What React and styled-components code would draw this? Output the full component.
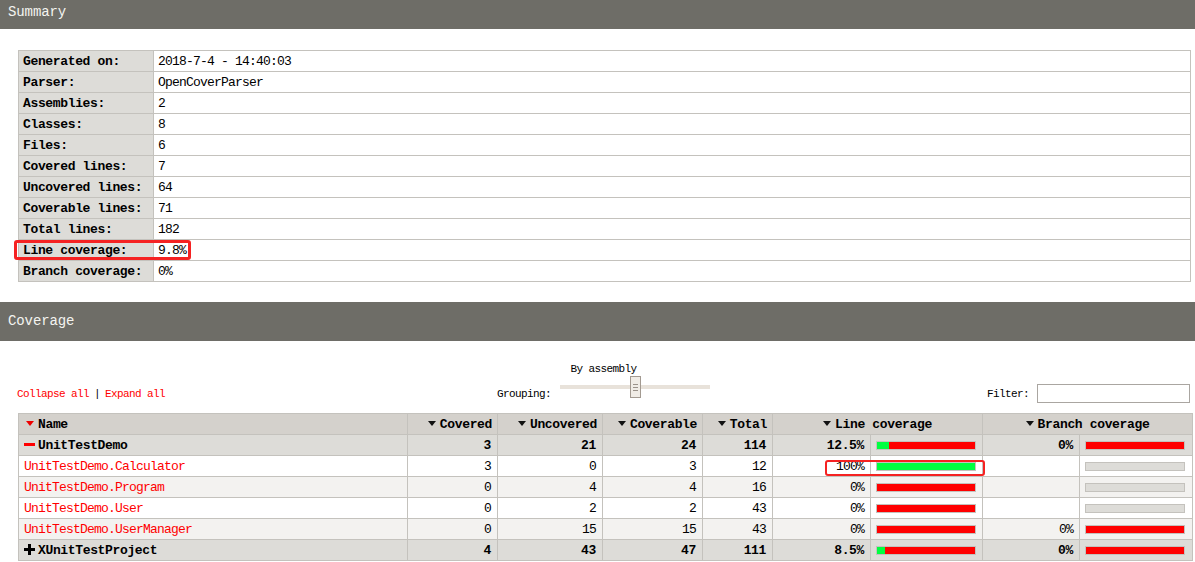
import React from "react";
import styled, { createGlobalStyle } from "styled-components";

const GlobalStyle = createGlobalStyle`
  body {
    margin: 0;
    background: #fff;
    font-family: "Liberation Mono", "DejaVu Sans Mono", monospace;
    color: #000;
  }
`;

const summary = [
  ["Generated on:", "2018-7-4 - 14:40:03"],
  ["Parser:", "OpenCoverParser"],
  ["Assemblies:", "2"],
  ["Classes:", "8"],
  ["Files:", "6"],
  ["Covered lines:", "7"],
  ["Uncovered lines:", "64"],
  ["Coverable lines:", "71"],
  ["Total lines:", "182"],
  ["Line coverage:", "9.8%", true],
  ["Branch coverage:", "0%"],
];

const rows = [
  { name: "UnitTestDemo", group: "open", covered: 3, uncovered: 21, coverable: 24, total: 114, line: 12.5, branch: 0 },
  { name: "UnitTestDemo.Calculator", covered: 3, uncovered: 0, coverable: 3, total: 12, line: 100, branch: null, mark: true },
  { name: "UnitTestDemo.Program", covered: 0, uncovered: 4, coverable: 4, total: 16, line: 0, branch: null },
  { name: "UnitTestDemo.User", covered: 0, uncovered: 2, coverable: 2, total: 43, line: 0, branch: null },
  { name: "UnitTestDemo.UserManager", covered: 0, uncovered: 15, coverable: 15, total: 43, line: 0, branch: 0 },
  { name: "XUnitTestProject", group: "closed", covered: 4, uncovered: 43, coverable: 47, total: 111, line: 8.5, branch: 0 },
];

const App = () => {
  return (
    <Page>
      <GlobalStyle />
      <SectionBar $cut>Summary</SectionBar>
      <Section>
        <SummaryTable>
          <colgroup>
            <col style={{ width: 135 }} />
            <col />
          </colgroup>
          <tbody>
            {summary.map(([label, value, mark]) => (
              <SummaryRow key={label}>
                <LabelCell>
                  {label}
                  {mark && <Highlight $left={-5} $top={0} $width={177} $height={20} $thick={3} />}
                </LabelCell>
                <ValueCell>{value}</ValueCell>
              </SummaryRow>
            ))}
          </tbody>
        </SummaryTable>
      </Section>

      <SectionBar>Coverage</SectionBar>
      <Toolbar>
        <Links>
          <RedLink>Collapse all</RedLink>
          <Divider>|</Divider>
          <RedLink>Expand all</RedLink>
        </Links>
        <Grouping>
          <SmallText>By assembly</SmallText>
          <GroupingRow>
            <SmallText>Grouping:</SmallText>
            <Slider>
              <Track />
              <Thumb>
                <Grip />
                <Grip />
                <Grip />
              </Thumb>
            </Slider>
          </GroupingRow>
        </Grouping>
        <FilterBox>
          <SmallText>Filter:</SmallText>
          <FilterInput type="text" />
        </FilterBox>
      </Toolbar>

      <Section $flush>
        <CoverageTable>
          <colgroup>
            <col style={{ width: 389 }} />
            <col style={{ width: 90 }} />
            <col style={{ width: 105 }} />
            <col style={{ width: 100 }} />
            <col style={{ width: 70 }} />
            <col style={{ width: 98 }} />
            <col style={{ width: 112 }} />
            <col style={{ width: 97 }} />
            <col style={{ width: 113 }} />
          </colgroup>
          <thead>
            <HeadRow>
              <HeadCell $align="left">
                <SortArrow $active />
                Name
              </HeadCell>
              <HeadCell>
                <SortArrow />
                Covered
              </HeadCell>
              <HeadCell>
                <SortArrow />
                Uncovered
              </HeadCell>
              <HeadCell>
                <SortArrow />
                Coverable
              </HeadCell>
              <HeadCell>
                <SortArrow />
                Total
              </HeadCell>
              <HeadCell colSpan={2} $align="center">
                <SortArrow />
                Line coverage
              </HeadCell>
              <HeadCell colSpan={2} $align="center">
                <SortArrow />
                Branch coverage
              </HeadCell>
            </HeadRow>
          </thead>
          <tbody>
            {rows.map((r, i) => (
              <DataRow key={r.name} $group={!!r.group} $alt={i % 2 === 0}>
                <NameCell $group={!!r.group}>
                  {r.group === "open" && <Toggle>
                    <svg width="11" height="11" viewBox="0 0 11 11">
                      <rect x="0" y="4" width="11" height="3" fill="#f00" />
                    </svg>
                  </Toggle>}
                  {r.group === "closed" && <Toggle>
                    <svg width="11" height="11" viewBox="0 0 11 11">
                      <rect x="0" y="4" width="11" height="3" fill="#000" />
                      <rect x="4" y="0" width="3" height="11" fill="#000" />
                    </svg>
                  </Toggle>}
                  {r.name}
                </NameCell>
                <NumCell $bold={!!r.group}>{r.covered}</NumCell>
                <NumCell $bold={!!r.group}>{r.uncovered}</NumCell>
                <NumCell $bold={!!r.group}>{r.coverable}</NumCell>
                <NumCell $bold={!!r.group}>{r.total}</NumCell>
                <NumCell $bold={!!r.group}>
                  {r.line}%
                  {r.mark && <Highlight $left={52} $top={4} $width={160} $height={16} $thick={2} />}
                </NumCell>
                <BarCell>
                  <Bar value={r.line} />
                </BarCell>
                <NumCell $bold={!!r.group}>{r.branch === null ? "" : `${r.branch}%`}</NumCell>
                <BarCell>
                  <Bar value={r.branch} />
                </BarCell>
              </DataRow>
            ))}
          </tbody>
        </CoverageTable>
      </Section>
    </Page>
  );
};

const Bar = ({ value }) => {
  if (value === null) return <BarFrame $empty />;
  return (
    <BarFrame>
      <Green style={{ width: `${value}%` }} />
      <Red />
    </BarFrame>
  );
};

export default App;

const Page = styled.div`
  margin-top: -7px;
  width: 1195px;
  font-size: 13px;
  letter-spacing: -0.8px;
`;

const SectionBar = styled.div`
  height: ${(p) => (p.$cut ? "36px" : "39px")};
  line-height: ${(p) => (p.$cut ? "38px" : "38px")};
  overflow: hidden;
  background-color: #6e6d67;
  color: #f4f4f0;
  font-size: 14px;
  letter-spacing: -0.1px;
  padding-left: 8px;
`;

const Section = styled.div`
  padding: ${(p) => (p.$flush ? "0" : "21px")} 3px 20px 18px;
`;

const SummaryTable = styled.table`
  width: 1173px;
  border-collapse: collapse;
  table-layout: fixed;
`;

const SummaryRow = styled.tr`
  height: 21px;
`;

const LabelCell = styled.td`
  position: relative;
  background-color: #dddcd8;
  border: 1px solid #c4c2bd;
  padding: 0 4px;
  font-weight: bold;
  letter-spacing: -0.35px;
  white-space: nowrap;
`;

const ValueCell = styled.td`
  border: 1px solid #c4c2bd;
  padding: 0 4px;
  white-space: nowrap;
`;

const Highlight = styled.div`
  position: absolute;
  left: ${(p) => p.$left}px;
  top: ${(p) => p.$top}px;
  width: ${(p) => p.$width}px;
  height: ${(p) => p.$height}px;
  border: ${(p) => p.$thick}px solid #f52222;
  border-radius: 3px;
  box-sizing: border-box;
  pointer-events: none;
`;

const Toolbar = styled.div`
  display: grid;
  grid-template-columns: 1fr auto 1fr;
  align-items: end;
  height: 72px;
  box-sizing: border-box;
  padding: 0 5px 10px 17px;
  font-size: 11px;
  letter-spacing: -0.6px;
`;

const Links = styled.div`
  line-height: 14px;
  margin-bottom: 2px;
`;

const RedLink = styled.a`
  color: #f00;
  cursor: pointer;
`;

const Divider = styled.span`
  margin: 0 5px;
`;

const SmallText = styled.span`
  line-height: 14px;
  white-space: nowrap;
`;

const Grouping = styled.div`
  display: flex;
  flex-direction: column;
  align-items: center;
`;

const GroupingRow = styled.div`
  display: flex;
  align-items: flex-end;
  gap: 9px;

  & > ${SmallText} {
    margin-bottom: 2px;
  }
`;

const Slider = styled.div`
  position: relative;
  width: 150px;
  height: 22px;
  margin-bottom: 5px;
`;

const Track = styled.div`
  position: absolute;
  left: 0;
  right: 0;
  top: 9px;
  height: 4px;
  background-color: #e8e2da;
`;

const Thumb = styled.div`
  position: absolute;
  left: 70px;
  top: 0;
  width: 11px;
  height: 22px;
  box-sizing: border-box;
  background-color: #f0ece6;
  border: 1px solid #a39a91;
  display: flex;
  flex-direction: column;
  align-items: center;
  justify-content: center;
  gap: 2px;
`;

const Grip = styled.div`
  width: 5px;
  height: 1px;
  background-color: #9a928a;
`;

const FilterBox = styled.div`
  display: flex;
  justify-content: flex-end;
  align-items: center;
  gap: 8px;
`;

const FilterInput = styled.input`
  width: 153px;
  height: 19px;
  box-sizing: border-box;
  border: 1px solid #aaa6a1;
  padding: 0 3px;
  margin: 0;
  outline: none;
`;

const CoverageTable = styled(SummaryTable)`
  width: 1174px;
`;

const HeadRow = styled.tr`
  height: 21px;
  background-color: #d4d1cc;
`;

const HeadCell = styled.th`
  border: 1px solid #c4c2bd;
  padding: 0 5px;
  text-align: ${(p) => p.$align || "right"};
  font-weight: bold;
  letter-spacing: -0.35px;
  white-space: nowrap;
`;

const SortArrow = styled.span`
  display: inline-block;
  width: 0;
  height: 0;
  border-left: 4px solid transparent;
  border-right: 4px solid transparent;
  border-top: 5px solid ${(p) => (p.$active ? "#e00" : "#111")};
  margin: 0 4px 2px ${(p) => (p.$active ? "2px" : "0")};
  vertical-align: middle;
`;

const DataRow = styled.tr`
  height: 21px;
  background-color: ${(p) => (p.$group ? "#dddcd8" : p.$alt ? "#f3f2f0" : "#fff")};
`;

const NameCell = styled.td`
  border: 1px solid #c4c2bd;
  padding: 0 5px;
  white-space: nowrap;
  color: ${(p) => (p.$group ? "#000" : "#f00")};
  font-weight: ${(p) => (p.$group ? "bold" : "normal")};
  letter-spacing: ${(p) => (p.$group ? "-0.35px" : "-0.8px")};
`;

const Toggle = styled.span`
  display: inline-block;
  width: 11px;
  height: 11px;
  margin-right: 3px;
  vertical-align: -1px;

  svg {
    display: block;
  }
`;

const NumCell = styled.td`
  position: relative;
  border: 1px solid #c4c2bd;
  padding: 0 6px 0 4px;
  text-align: right;
  white-space: nowrap;
  font-weight: ${(p) => (p.$bold ? "bold" : "normal")};
  letter-spacing: ${(p) => (p.$bold ? "-0.35px" : "-0.8px")};
`;

const BarCell = styled.td`
  border: 1px solid #c4c2bd;
  padding: 0 5px;
`;

const BarFrame = styled.div`
  display: flex;
  width: 100px;
  height: 9px;
  box-sizing: border-box;
  border: 1px solid #c4c2bd;
  background-color: ${(p) => (p.$empty ? "#dddcd8" : "#f00")};
`;

const Green = styled.div`
  height: 100%;
  background-color: #00ff40;
`;

const Red = styled.div`
  flex: 1;
  height: 100%;
  background-color: #f00;
`;
